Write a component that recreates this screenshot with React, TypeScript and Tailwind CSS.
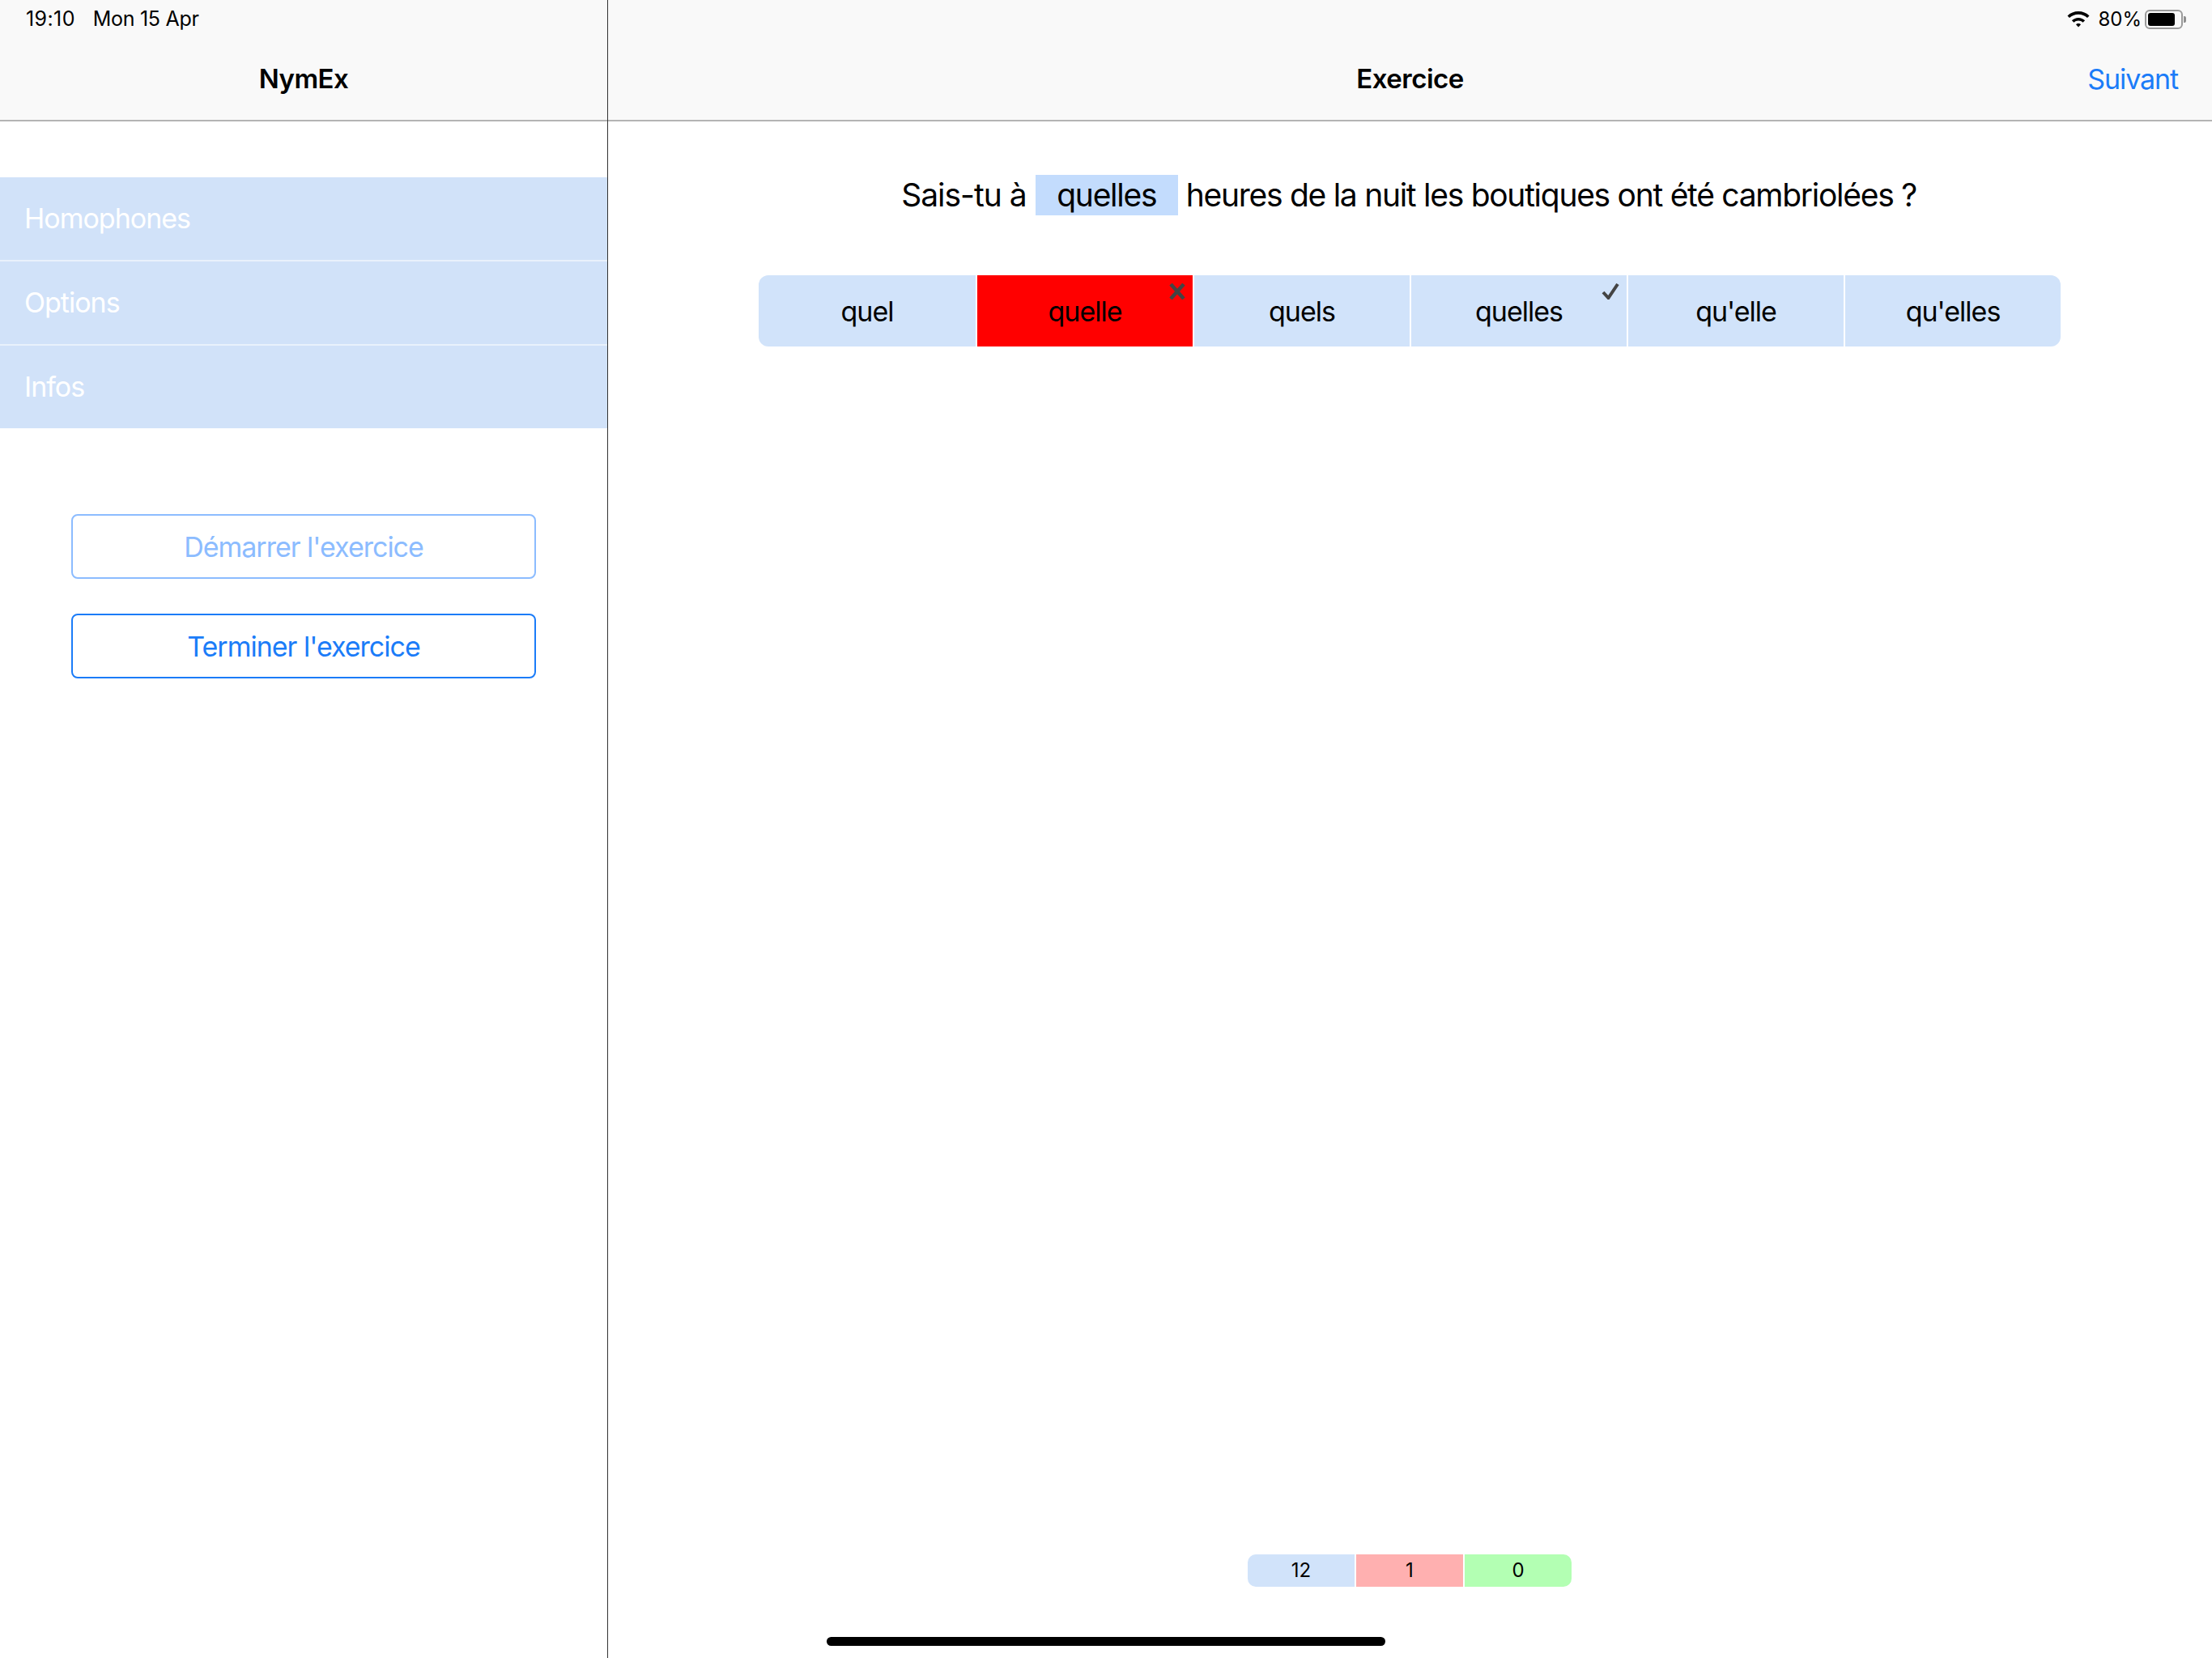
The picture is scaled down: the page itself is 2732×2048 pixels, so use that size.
const menuItems = ["Homophones", "Options", "Infos"];

const choices = ["quel", "quelle", "quels", "quelles", "qu'elle", "qu'elles"];

const WifiIcon = () => (
  <svg viewBox="3 3 22 16" className="w-[28px] h-[20px]" fill="#000">
    <path d="M14 3c4.200 0 8 1.600 10.800 4.300l-2 2.100C20.500 7.200 17.400 5.900 14 5.900S7.500 7.200 5.200 9.400l-2-2.100C6 4.600 9.800 3 14 3z" />
    <path d="M14 9.300c2.500 0 4.800 1 6.500 2.600l-2.100 2.100c-1.200-1.100-2.700-1.800-4.400-1.800s-3.200.7-4.400 1.800l-2.100-2.100c1.700-1.600 4-2.600 6.500-2.600z" />
    <path d="M14 15c1 0 1.800.4 2.400 1L14 18.600 11.600 16c.6-.6 1.400-1 2.400-1z" />
  </svg>
);

const BatteryIcon = () => (
  <div className="flex items-center">
    <div className="w-[47px] h-[24px] rounded-[6px] border-2 border-[#9a9a9a] p-[2px]">
      <div className="w-[33px] h-full rounded-[3px] bg-black" />
    </div>
    <div className="w-[3px] h-[8px] ml-[1px] rounded-r-[2px] bg-[#8f8f8f]" />
  </div>
);

export default function App() {
  return (
    <div className="relative flex w-[2732px] h-[2048px] overflow-hidden bg-white text-black font-['Inter','Liberation_Sans',sans-serif]">
      <aside className="w-[751px] shrink-0 border-r border-[#333333] flex flex-col">
        <header className="h-[150px] shrink-0 bg-[#f9f9f9] border-b-2 border-[#b4b4b4]">
          <div className="h-[47px] pl-[32px] flex items-center gap-[22px] text-[25px] leading-none">
            <span className="tracking-[0.4px]">19:10</span>
            <span className="tracking-[-0.3px]">Mon 15 Apr</span>
          </div>
          <h1 className="h-[102px] flex items-center justify-center text-[33px] font-semibold tracking-[-0.5px]">NymEx</h1>
        </header>

        <nav className="mt-[69px] flex flex-col">
          {menuItems.map((item, i) => (
            <div
              key={item}
              className={`pl-[30px] pb-[2px] flex items-center bg-[#d1e2f9] text-white text-[34px] tracking-[-1px] ${i < 2 ? "h-[104px] border-b-2 border-[#e9f1fc]" : "h-[102px]"}`}
            >
              {item}
            </div>
          ))}
        </nav>

        <div className="mt-[106px] px-[88px] flex flex-col gap-[43px]">
          <button className="h-[80px] rounded-[8px] border-2 border-[#8cbcff] text-[#8cbcff] text-[34px] tracking-[-1px]">
            Démarrer l'exercice
          </button>
          <button className="h-[80px] rounded-[8px] border-2 border-[#1b7cf8] text-[#1b7cf8] text-[34px] tracking-[-1px]">
            Terminer l'exercice
          </button>
        </div>
      </aside>

      <main className="flex-1 flex flex-col">
        <header className="h-[150px] shrink-0 bg-[#f9f9f9] border-b-2 border-[#b4b4b4]">
          <div className="h-[47px] pr-[32px] flex items-center justify-end text-[24px] leading-none">
            <WifiIcon />
            <span className="ml-[10px] mr-[4px]">80%</span>
            <BatteryIcon />
          </div>
          <div className="relative h-[102px] flex items-center justify-center text-[33px] font-semibold tracking-[-0.5px]">
            Exercice
            <span className="absolute right-[42px] top-[29px] text-[34px] leading-[44px] font-normal tracking-[-1.1px] text-[#1b7cf8]">Suivant</span>
          </div>
        </header>

        <div className="mt-[66px] pr-[3px] flex items-center justify-center text-[39px] leading-[50px] tracking-[-1.28px]">
          <span className="tracking-[-1px]">Sais-tu à</span>
          <span className="ml-[11px] mr-[10px] w-[176px] h-[50px] flex items-center justify-center bg-[#c3dcfd]">quelles</span>
          <span>heures de la nuit les boutiques ont été cambriolées ?</span>
        </div>

        <div className="mt-[74px] ml-[186px] grid grid-cols-[268px_repeat(5,266px)] gap-[2px] w-[1608px] h-[88px] rounded-[12px] overflow-hidden">
          {choices.map((choice, i) => (
            <div
              key={choice}
              className={`relative flex items-center justify-center text-[34px] tracking-[-1px] ${i === 1 ? "bg-[#ff0000]" : "bg-[#d1e3fa]"}`}
            >
              {choice}
              {i === 1 && (
                <svg viewBox="0 0 20 20" className="absolute top-[10px] right-[9px] w-[20px] h-[20px]" fill="none" stroke="#444" strokeWidth="4.500">
                  <path d="M2 1l16 18M18 1L2 19" />
                </svg>
              )}
              {i === 3 && (
                <svg viewBox="0 0 22 20" className="absolute top-[10px] right-[9px] w-[22px] h-[20px]" fill="none" stroke="#444" strokeWidth="4">
                  <path d="M2 11l6.500 7L20 1" />
                </svg>
              )}
            </div>
          ))}
        </div>

        <div className="mt-auto mb-[88px] ml-[790px] flex w-[400px] h-[40px] rounded-[10px] overflow-hidden gap-[2px] text-[24px]">
          <div className="flex-1 flex items-center justify-center bg-[#d1e3fa]">12</div>
          <div className="flex-1 flex items-center justify-center bg-[#ffb0b0]">1</div>
          <div className="flex-1 flex items-center justify-center bg-[#b3ffb3]">0</div>
        </div>
      </main>

      {/* home indicator */}
      <div className="absolute left-[1021px] top-[2022px] w-[690px] h-[11px] rounded-full bg-black" />
    </div>
  );
}
